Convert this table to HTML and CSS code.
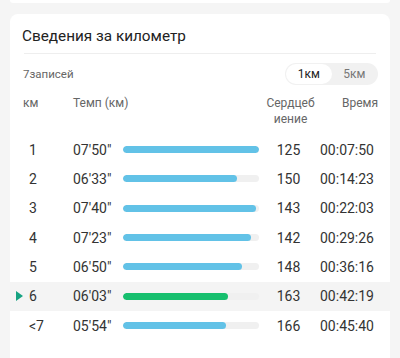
FILE: index.html
```html
<!DOCTYPE html>
<html lang="ru">
<head>
<meta charset="utf-8">
<link rel="stylesheet" href="styles.css">
</head>
<body>
<div class="topcard"></div>
<div class="card">
  <h1 class="title">Сведения за километр</h1>
  <div class="divider"></div>
  <div class="toolbar">
    <span class="count">7записей</span>
    <div class="toggle">
      <span class="seg active">1км</span>
      <span class="seg">5км</span>
    </div>
  </div>
  <div class="head">
    <span class="c-km">км</span>
    <span class="c-pace">Темп (км)</span>
    <span class="c-hr">Сердцеб<br>иение</span>
    <span class="c-time">Время</span>
  </div>
  <div class="rows">
    <div class="row"><span class="c-km">1</span><span class="c-pace">07'50"</span><span class="bar"><i style="width:136px"></i></span><span class="c-hr">125</span><span class="c-time">00:07:50</span></div>
    <div class="row"><span class="c-km">2</span><span class="c-pace">06'33"</span><span class="bar"><i style="width:114px"></i></span><span class="c-hr">150</span><span class="c-time">00:14:23</span></div>
    <div class="row"><span class="c-km">3</span><span class="c-pace">07'40"</span><span class="bar"><i style="width:133px"></i></span><span class="c-hr">143</span><span class="c-time">00:22:03</span></div>
    <div class="row"><span class="c-km">4</span><span class="c-pace">07'23"</span><span class="bar"><i style="width:128px"></i></span><span class="c-hr">142</span><span class="c-time">00:29:26</span></div>
    <div class="row"><span class="c-km">5</span><span class="c-pace">06'50"</span><span class="bar"><i style="width:119px"></i></span><span class="c-hr">148</span><span class="c-time">00:36:16</span></div>
    <div class="row current"><span class="c-km"><span class="marker"></span>6</span><span class="c-pace">06'03"</span><span class="bar green"><i style="width:105px"></i></span><span class="c-hr">163</span><span class="c-time">00:42:19</span></div>
    <div class="row"><span class="c-km">&lt;7</span><span class="c-pace">05'54"</span><span class="bar"><i style="width:103px"></i></span><span class="c-hr">166</span><span class="c-time">00:45:40</span></div>
  </div>
</div>
</body>
</html>
```

FILE: styles.css
```css
* { box-sizing: border-box; }
html, body { margin: 0; padding: 0; }
body {
  background: #f5f5f5;
  font-family: Roboto, "Noto Sans", sans-serif;
  color: #333;
  padding: 0 10px;
  height: 358px;
  overflow: hidden;
}
.topcard {
  height: 3px;
  background: #fff;
  border-radius: 0 0 8px 8px;
}
.card {
  margin-top: 11px;
  background: #fff;
  border-radius: 8px 8px 0 0;
  height: 344px;
}
.title {
  margin: 0;
  padding: 10px 12px 0;
  font-size: 15.3px;
  font-weight: 400;
  line-height: 24px;
  color: #222;
}
.divider {
  height: 1px;
  background: #eeeeee;
  margin: 5px 14px 0;
}
.toolbar {
  display: flex;
  align-items: center;
  justify-content: space-between;
  margin-top: 9px;
  padding: 0 12px 0 13px;
  height: 22px;
}
.count {
  font-size: 11.5px;
  color: #666;
}
.toggle {
  display: flex;
  background: #f1f1f1;
  border-radius: 11px;
  padding: 1px;
  height: 22px;
  width: 93px;
}
.seg {
  flex: 1;
  display: flex;
  align-items: center;
  justify-content: center;
  font-size: 12px;
  color: #777;
  border-radius: 10px;
}
.seg.active {
  background: #fff;
  color: #222;
}
.head, .row {
  display: grid;
  grid-template-columns: 50px 50px 136px 59px 1fr;
  padding: 0 12px 0 13px;
}
.head {
  margin-top: 10px;
  padding-bottom: 8px;
  font-size: 12px;
  line-height: 16px;
  color: #666;
}
.head .c-pace { grid-column: 2 / 4; }
.head .c-hr { text-align: center; padding-left: 4px; }
.head .c-time { text-align: right; }
.row {
  height: 29.33px;
  align-items: center;
  font-size: 14px;
  color: #333;
}
.row .c-km { padding-left: 6px; position: relative; }
.row .c-hr { text-align: center; }
.row .c-time { padding-left: 2px; }
.row.current { background: #f4f4f4; }
.marker {
  position: absolute;
  left: -7px;
  top: 50%;
  margin-top: -5px;
  width: 0;
  height: 0;
  border-left: 7px solid #17a382;
  border-top: 5px solid transparent;
  border-bottom: 5px solid transparent;
}
.bar {
  display: block;
  height: 7px;
  background: #f0f0f0;
  border-radius: 4px;
  overflow: hidden;
}
.bar i {
  display: block;
  height: 100%;
  background: #62c2e7;
  border-radius: 4px;
}
.bar.green i { background: #17bf6e; }
```
